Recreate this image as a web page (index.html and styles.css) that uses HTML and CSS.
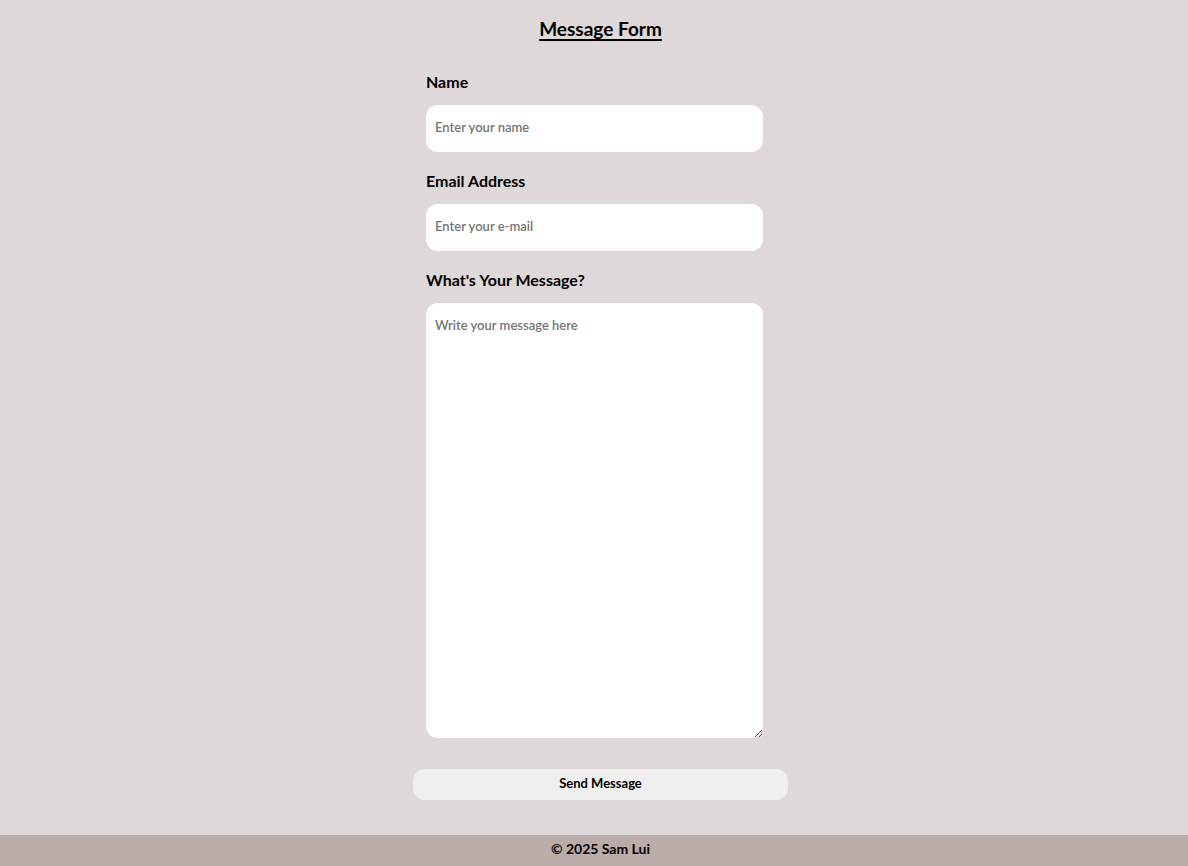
FILE: index.html
```html
<!DOCTYPE html>
<html lang="en">
<head>
<meta charset="utf-8">
<title>Message Form</title>
<link rel="stylesheet" href="styles.css">
</head>
<body>
<main class="page">
  <h1 class="title">Message Form</h1>
  <form class="form">
    <label class="label" for="name">Name</label>
    <input class="field" id="name" type="text" placeholder="Enter your name">
    <label class="label" for="email">Email Address</label>
    <input class="field" id="email" type="email" placeholder="Enter your e-mail">
    <label class="label" for="msg">What's Your Message?</label>
    <textarea class="field area" id="msg" placeholder="Write your message here"></textarea>
    <button class="send" type="button">Send Message</button>
  </form>
</main>
<footer class="footer">© 2025 Sam Lui</footer>
</body>
</html>
```
FILE: styles.css
```css
html, body {
  margin: 0;
  padding: 0;
  background: #ded8d8;
  font-family: "Lato", "Noto Sans", sans-serif;
  color: #000;
}
.page {
  display: flex;
  flex-direction: column;
  align-items: center;
  padding: 16px 0 35px 13px;
  min-height: 784px;
  box-sizing: border-box;
}
.title {
  margin: 0;
  font-size: 19px;
  font-weight: 700;
  text-decoration: underline;
  text-decoration-thickness: 2px;
  text-underline-offset: 3px;
  line-height: 26px;
}
.form {
  width: 375px;
  box-sizing: border-box;
  display: flex;
  flex-direction: column;
  align-items: flex-start;
  padding-left: 13px;
  margin-top: 31px;
}
.label {
  width: 337px;
  font-size: 16px;
  font-weight: 700;
  line-height: 18px;
  margin-bottom: 14px;
}
.field {
  width: 337px;
  height: 47px;
  box-sizing: border-box;
  border: none;
  border-radius: 12px;
  background: #fff;
  padding: 0 9px 3px;
  font-family: inherit;
  font-size: 13px;
  font-weight: 600;
  margin-bottom: 20px;
  outline: none;
}
.field::placeholder {
  color: #757575;
}
.area {
  height: 435px;
  padding: 14px 9px;
  resize: vertical;
  margin-bottom: 31px;
}
.send {
  width: 375px;
  margin-left: -13px;
  height: 31px;
  padding: 0 0 3px;
  border: none;
  border-radius: 12px;
  background: #efefef;
  font-family: inherit;
  font-size: 13px;
  font-weight: 700;
  color: #000;
}
.footer {
  background: #baaca9;
  height: 31px;
  box-sizing: border-box;
  line-height: 27px;
  padding: 0 0 4px 13px;
  text-align: center;
  font-size: 14px;
  font-weight: 700;
}
```
